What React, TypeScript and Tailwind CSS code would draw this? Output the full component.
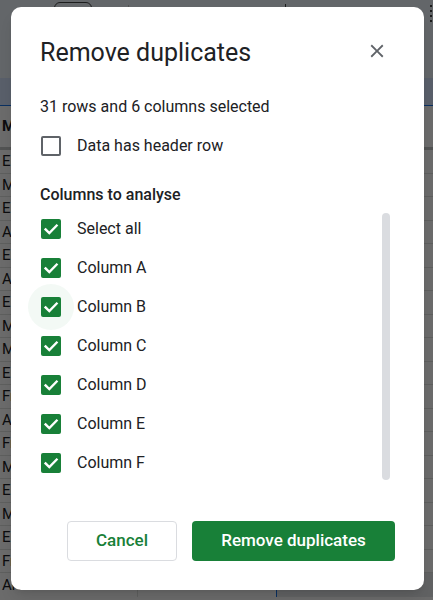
import { useState } from "react";

const subjects = ["English", "Maths", "English", "Art", "English", "Art", "English", "Maths", "Maths", "English", "French", "Art", "French", "Maths", "English", "Maths", "English", "French"];

const CheckIcon = () => (
  <svg width="20" height="20" viewBox="0 0 20 20" fill="none">
    <path d="M4.6 10.4 8.3 14 15.6 6.6" stroke="white" strokeWidth="2.4" strokeLinecap="square" />
  </svg>
);

const Checkbox = ({ checked, onClick, ripple }: { checked: boolean; onClick: () => void; ripple?: boolean }) => (
  <button type="button" onClick={onClick} className="relative ml-px h-5 w-5 shrink-0">
    {ripple && <span className="absolute -inset-[13px] rounded-full bg-[#188038]/[0.05]" />}
    {checked ? (
      <span className="relative flex h-5 w-5 items-center justify-center rounded-[2px] bg-[#188038]">
        <CheckIcon />
      </span>
    ) : (
      <span className="relative block h-5 w-5 rounded-[2px] border-2 border-[#5f6368]" />
    )}
  </button>
);

const Sheet = () => (
  <div className="flex flex-col">
    <div className="relative h-[78px] bg-[#edf2fa]">
      <div className="absolute left-[54px] top-[2px] h-8 w-[38px] rounded-md border border-[#444746]" />
      <div className="absolute left-[128px] top-[5px] h-6 w-px bg-[#c4c7c5]" />
      <div className="absolute left-[285px] top-[4px] h-3 w-px bg-[#444746]" />
      <div className="absolute right-[1px] top-[5px] flex flex-col gap-[3px]">
        <span className="h-[2px] w-[2px] bg-[#444746]" />
        <span className="h-[2px] w-[2px] bg-[#444746]" />
        <span className="h-[2px] w-[2px] bg-[#444746]" />
        <span className="h-[2px] w-[2px] bg-[#444746]" />
      </div>
    </div>
    <div className="h-[28px] border-b border-[#1a73e8] bg-[#d3e3fd]" />
    <div className="flex h-[44px] items-center border-b-[3px] border-[#c4c7c5] bg-white pl-[2px] text-[15px] font-bold text-[#202124]">
      Maths
    </div>
    {subjects.map((a, i) => (
      <div key={i} className="flex h-[23.5px] border-b border-[#e1e3e1] bg-white text-[15px] text-[#202124]">
        <div className="flex w-[138px] items-center border-r border-[#e1e3e1] pl-[2px]">{a}</div>
        <div className="w-[138px] border-r border-[#e1e3e1]" />
        <div className="flex-1" />
      </div>
    ))}
    <div className="flex h-[24px] bg-white text-[15px] text-[#202124]">
      <div className="flex w-[138px] items-center border-r border-[#e1e3e1] pl-[2px]">Art</div>
      <div className="flex w-[138px] items-center pl-[5px]">Lacrosse</div>
      <div className="flex-1 border-l border-[#1a73e8] bg-[#e8eaed]" />
    </div>
  </div>
);

export default function App() {
  const columns = ["Column A", "Column B", "Column C", "Column D", "Column E", "Column F"];
  const [header, setHeader] = useState(false);
  const [picked, setPicked] = useState<boolean[]>(columns.map(() => true));
  const allPicked = picked.every(Boolean);

  const toggle = (i: number) => setPicked(picked.map((p, j) => (j === i ? !p : p)));

  return (
    <div className="relative h-[600px] w-[433px] overflow-hidden font-['Roboto','Noto_Sans',sans-serif]">
      <Sheet />
      <div className="absolute inset-0 bg-black/[0.58] pl-[11px] pt-[7px]">
        <div className="flex h-[583px] w-[413px] flex-col rounded-[10px] bg-white px-[29px] pb-[29px] pt-[30px] text-[#202124] shadow-lg">
          <div className="flex items-start justify-between">
            <h1 className="text-[25px] leading-8">Remove duplicates</h1>
            <button type="button" className="mr-[7px] mt-[3px] text-[#5f6368]">
              <svg width="22" height="22" viewBox="0 0 24 24" fill="currentColor">
                <path d="M19 6.41 17.59 5 12 10.59 6.41 5 5 6.41 10.59 12 5 17.59 6.41 19 12 13.41 17.59 19 19 17.59 13.41 12z" />
              </svg>
            </button>
          </div>

          <p className="mt-[26px] text-base leading-6">31 rows and 6 columns selected</p>

          <label className="mt-[7px] flex h-[39px] items-center gap-4 text-base">
            <Checkbox checked={header} onClick={() => setHeader(!header)} />
            <span>Data has header row</span>
          </label>

          <p className="mt-[18px] text-base font-medium leading-6">Columns to analyse</p>

          <div className="mt-[2px] flex">
            <div className="flex flex-1 flex-col">
              <label className="flex h-[39px] items-center gap-4 text-base">
                <Checkbox
                  checked={allPicked}
                  onClick={() => setPicked(columns.map(() => !allPicked))}
                />
                <span>Select all</span>
              </label>
              {columns.map((c, i) => (
                <label key={c} className="flex h-[39px] items-center gap-4 text-base">
                  <Checkbox checked={picked[i]} onClick={() => toggle(i)} ripple={i === 1} />
                  <span>{c}</span>
                </label>
              ))}
            </div>
            <div className="mb-[2px] mr-[5px] mt-[4px] w-2 rounded-full bg-[#dadce0]" />
          </div>

          <div className="mt-auto flex justify-end gap-[15px]">
            <button
              type="button"
              className="h-10 w-[110px] rounded-[4px] border border-[#dadce0] text-[17px] font-medium text-[#188038]"
            >
              Cancel
            </button>
            <button
              type="button"
              className="h-10 w-[203px] rounded-[4px] bg-[#188038] text-[17px] font-medium text-white"
            >
              Remove duplicates
            </button>
          </div>
        </div>
      </div>
    </div>
  );
}
